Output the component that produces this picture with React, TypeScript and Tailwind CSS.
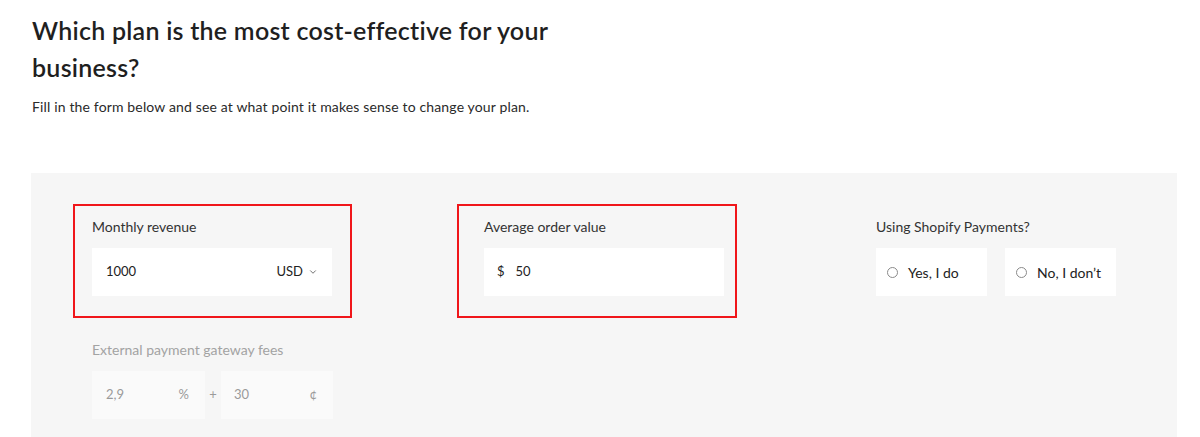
import { ChevronDown } from "lucide-react";

const font = { fontFamily: "Lato, 'Noto Sans', sans-serif" };

function Annotation({ className }: { className: string }) {
  // red review box drawn over the field group
  return <span className={`pointer-events-none absolute border-2 border-[#f0161a] ${className}`} />;
}

function Radio({ label }: { label: string }) {
  return (
    <div className="flex h-12 flex-1 items-center gap-[10px] bg-white pl-[11px] text-[14px] text-[#222]">
      <span className="h-[11px] w-[11px] rounded-full border border-[#8a8a8a]" />
      {label}
    </div>
  );
}

export default function App() {
  return (
    <div className="min-h-[437px] bg-white text-[#222]" style={font}>
      <div className="px-[32px] pt-[12px]">
        <h1 className="w-[560px] text-[25px] font-semibold leading-[37px] tracking-[0.25px] text-[#1f1f1f]">
          Which plan is the most cost-effective for your business?
        </h1>
        <p className="mt-[11px] text-[14px] leading-[20px] tracking-[0.15px] text-[#2a2a2a]">
          Fill in the form below and see at what point it makes sense to change your plan.
        </p>
      </div>

      <div className="mx-[31px] mt-[56px] h-[280px] w-[1146px] bg-[#f6f6f6] px-[61px] pt-[45px]">
        <div className="grid grid-cols-[240px_240px_240px] gap-x-[152px]">
          <div className="relative">
            <Annotation className="-left-[19px] -right-[20px] -top-[14px] -bottom-[22px]" />
            <div className="text-[14px] leading-[18px] text-[#333]">Monthly revenue</div>
            <div className="mt-[12px] flex h-12 items-center justify-between bg-white pl-[14px] pr-[14px] text-[13px] text-[#222]">
              <span>1000</span>
              <span className="flex items-center gap-[5px]">
                USD
                <ChevronDown className="h-[10px] w-[10px] text-[#555]" strokeWidth={2} />
              </span>
            </div>
          </div>

          <div className="relative">
            <Annotation className="-left-[27px] -right-[13px] -top-[14px] -bottom-[22px]" />
            <div className="text-[14px] leading-[18px] text-[#333]">Average order value</div>
            <div className="mt-[12px] flex h-12 items-center gap-[11px] bg-white pl-[13px] text-[13px] text-[#222]">
              <span>$</span>
              <span>50</span>
            </div>
          </div>

          <div>
            <div className="text-[14px] leading-[18px] text-[#333]">Using Shopify Payments?</div>
            <div className="mt-[12px] flex gap-[18px]">
              <Radio label="Yes, I do" />
              <Radio label="No, I don’t" />
            </div>
          </div>
        </div>

        <div className="mt-[45px] w-[241px]">
          <div className="text-[14px] leading-[18px] text-[#a3a3a3]">External payment gateway fees</div>
          <div className="mt-[12px] flex items-center text-[13px] text-[#9a9a9a]">
            <div className="flex h-12 w-[113px] items-center justify-between bg-[#fafafa] pl-[14px] pr-[16px]">
              <span>2,9</span>
              <span>%</span>
            </div>
            <span className="flex-1 text-center">+</span>
            <div className="flex h-12 w-[112px] items-center justify-between bg-[#fafafa] pl-[13px] pr-[16px]">
              <span>30</span>
              <span>¢</span>
            </div>
          </div>
        </div>
      </div>
    </div>
  );
}
